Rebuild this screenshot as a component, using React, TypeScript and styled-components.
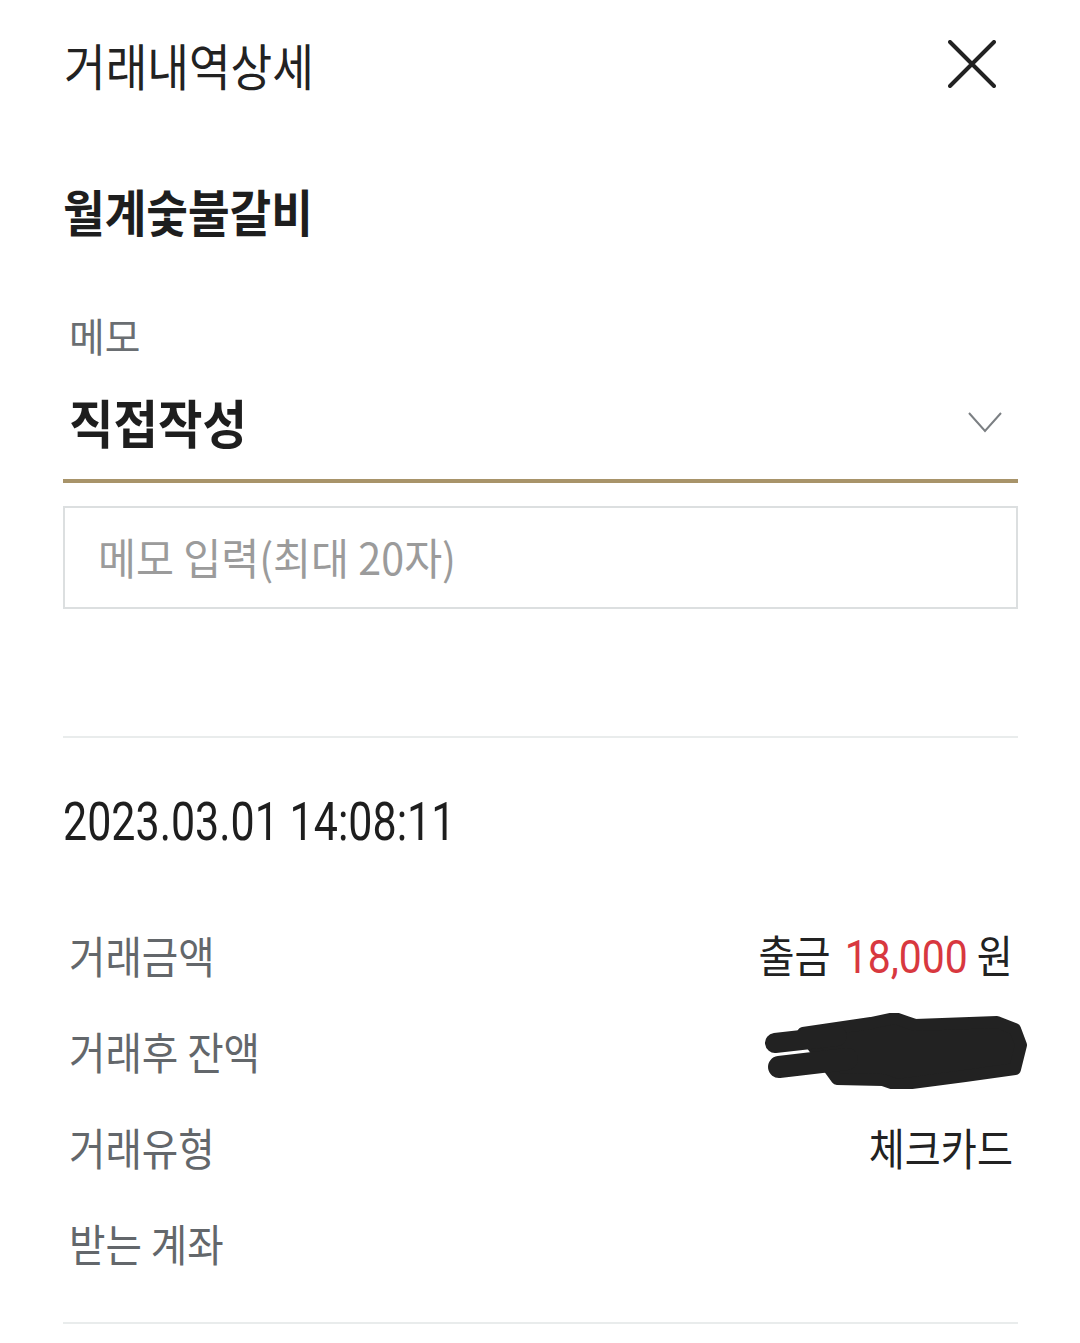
import styled, { createGlobalStyle, css } from "styled-components";

const GlobalStyle = createGlobalStyle`
  html, body {
    margin: 0;
    padding: 0;
    background: #ffffff;
  }
  body {
    font-family: "Noto Sans CJK KR", "Noto Sans", sans-serif;
    color: #222222;
  }
`;

// the reference font is a narrow one, so squeeze the glyphs a bit
const narrow = (origin: "left" | "right", amount = 0.9) => css`
  display: inline-block;
  white-space: nowrap;
  transform: scaleX(${amount});
  transform-origin: ${origin} center;
`;

const Page = styled.div`
  width: 1080px;
  box-sizing: border-box;
  padding: 0 62px 0 63px;
`;

const Header = styled.div`
  height: 128px;
  display: flex;
  align-items: center;
  justify-content: space-between;
`;

const PageTitle = styled.span`
  ${narrow("left", 0.905)};
  font-size: 50px;
  font-weight: 400;
  line-height: 60px;
  color: #222;
  margin-left: 1px;
`;

const CloseButton = styled.button`
  border: none;
  background: none;
  padding: 0;
  margin-right: 22px;
  width: 48px;
  height: 48px;
  display: flex;
  cursor: pointer;
`;

const StoreName = styled.div`
  margin-top: 52px;
  height: 60px;
  line-height: 60px;
`;

const StoreText = styled.span`
  ${narrow("left", 0.905)};
  font-size: 50px;
  font-weight: 700;
  color: #1e1e1e;
`;

const FieldLabel = styled.div`
  margin-top: 70px;
  height: 50px;
  line-height: 50px;
  padding-left: 6px;
`;

const LabelText = styled.span`
  ${narrow("left", 0.97)};
  font-size: 40px;
  color: #6a6e72;
`;

const SelectRow = styled.div`
  margin-top: 26px;
  height: 71px;
  padding: 0 16px 22px 6px;
  display: flex;
  align-items: center;
  justify-content: space-between;
  border-bottom: 4px solid #a8946a;
`;

const SelectValue = styled.span`
  ${narrow("left", 0.93)};
  font-size: 52px;
  font-weight: 700;
  line-height: 60px;
  color: #1e1e1e;
`;

const MemoInput = styled.div`
  margin-top: 23px;
  height: 103px;
  box-sizing: border-box;
  border: 2px solid #dcdfe0;
  display: flex;
  align-items: center;
  padding: 0 0 4px 33px;
`;

const Placeholder = styled.span`
  ${narrow("left", 0.96)};
  font-size: 43px;
  color: #9b9b9b;
  line-height: 60px;
`;

const Divider = styled.div<{ $gap: number }>`
  margin-top: ${(p) => p.$gap}px;
  height: 2px;
  background: #e9ecec;
`;

const DateLine = styled.div`
  margin-top: 54px;
  height: 60px;
  line-height: 60px;
`;

const DateText = styled.span`
  ${narrow("left", 0.796)};
  font-family: Roboto, "Noto Sans CJK KR", sans-serif;
  font-size: 54px;
  color: #1e1e1e;
`;

const InfoList = styled.div`
  margin-top: 55px;
  display: flex;
  flex-direction: column;
`;

const InfoRow = styled.div`
  height: 96px;
  display: flex;
  align-items: center;
  justify-content: space-between;
  padding: 0 5px 0 6px;
`;

const RowLabel = styled.span`
  ${narrow("left", 0.9)};
  font-size: 44px;
  color: #63676b;
  line-height: 56px;
`;

const RowValue = styled.span`
  ${narrow("right", 0.89)};
  font-size: 44px;
  color: #222;
  line-height: 56px;
`;

const Amount = styled.span`
  font-family: Roboto, "Noto Sans CJK KR", sans-serif;
  color: #d8383f;
  font-size: 46px;
  margin: 0 10px 0 16px;
`;

const Redacted = styled.svg`
  margin-right: -14px;
  display: block;
`;

const infoRows = [
  { label: "거래금액", kind: "amount" },
  { label: "거래후 잔액", kind: "hidden" },
  { label: "거래유형", kind: "text", value: "체크카드" },
  { label: "받는 계좌", kind: "text", value: "" },
];

function App() {
  return (
    <>
      <GlobalStyle />
      <Page>
        <Header>
          <PageTitle>거래내역상세</PageTitle>
          <CloseButton aria-label="닫기">
            <svg width="48" height="48" viewBox="0 0 48 48">
              <path
                d="M2 2 L46 46 M46 2 L2 46"
                stroke="#222"
                strokeWidth="4"
                strokeLinecap="round"
              />
            </svg>
          </CloseButton>
        </Header>

        <StoreName>
          <StoreText>월계숯불갈비</StoreText>
        </StoreName>

        <FieldLabel>
          <LabelText>메모</LabelText>
        </FieldLabel>
        <SelectRow>
          <SelectValue>직접작성</SelectValue>
          <svg width="34" height="22" viewBox="0 0 34 22">
            <path
              d="M1 2 L17 20 L33 2"
              fill="none"
              stroke="#7b7f83"
              strokeWidth="2"
            />
          </svg>
        </SelectRow>
        <MemoInput>
          <Placeholder>메모 입력(최대 20자)</Placeholder>
        </MemoInput>

        <Divider $gap={127} />

        <DateLine>
          <DateText>2023.03.01 14:08:11</DateText>
        </DateLine>

        <InfoList>
          {infoRows.map((row) => (
            <InfoRow key={row.label}>
              <RowLabel>{row.label}</RowLabel>
              {row.kind === "amount" && (
                <RowValue>
                  출금<Amount>18,000</Amount>원
                </RowValue>
              )}
              {row.kind === "hidden" && (
                <Redacted width="262" height="76" viewBox="0 0 262 76">
                  <g
                    fill="#222"
                    stroke="#222"
                    strokeLinejoin="round"
                    strokeLinecap="round"
                  >
                    <path
                      d="M38 20 L106 10 L130 5 L150 12 L232 9 L250 16 L256 32 L250 56 L200 63 L132 72 L118 67 L72 66 L56 44 Z"
                      strokeWidth="12"
                    />
                    <path d="M10 30 L72 23" strokeWidth="20" fill="none" />
                    <path d="M14 54 L82 46" strokeWidth="22" fill="none" />
                  </g>
                </Redacted>
              )}
              {row.kind === "text" && <RowValue>{row.value}</RowValue>}
            </InfoRow>
          ))}
        </InfoList>

        <Divider $gap={31} />
      </Page>
    </>
  );
}

export default App;
